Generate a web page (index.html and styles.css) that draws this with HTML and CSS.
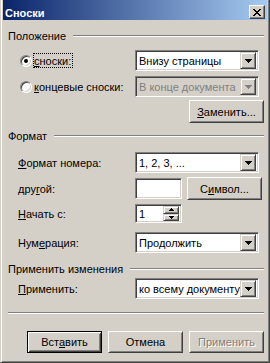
FILE: index.html
```html
<!DOCTYPE html>
<html lang="ru">
<head>
    <meta charset="UTF-8">
    <title>Сноски</title>
    <link rel="stylesheet" href="styles.css">
</head>
<body>
    <div class="window">
        <div class="titlebar">
            <span class="title">Сноски</span>
            <span class="close">
                <svg width="8" height="7" viewBox="0 0 8 7" shape-rendering="crispEdges"><path d="M0 0h2v1H0z M6 0h2v1H6z M1 1h2v1H1z M5 1h2v1H5z M2 2h4v1H2z M3 3h2v1H3z M2 4h4v1H2z M1 5h2v1H1z M5 5h2v1H5z M0 6h2v1H0z M6 6h2v1H6z" fill="#000"/></svg>
            </span>
        </div>

        <div class="content">
            <!-- Положение -->
            <div class="group-title g1"><span>Положение</span><i class="etch"></i></div>
            <div class="row radio-row r1">
                <span class="radio checked"></span>
                <span class="radio-label"><span class="focus"><u>с</u>носки:</span></span>
                <div class="combo"><span class="value">Внизу страницы</span><span class="arrow"><svg width="7" height="4" viewBox="0 0 7 4" shape-rendering="crispEdges"><path d="M0 0h7v1H0z M1 1h5v1H1z M2 2h3v1H2z M3 3h1v1H3z" fill="#000"/></svg></span></div>
            </div>
            <div class="row radio-row r2">
                <span class="radio"></span>
                <span class="radio-label"><u>к</u>онцевые сноски:</span>
                <div class="combo disabled"><span class="value">В конце документа</span><span class="arrow"><svg width="7" height="4" viewBox="0 0 7 4" shape-rendering="crispEdges"><path d="M0 0h7v1H0z M1 1h5v1H1z M2 2h3v1H2z M3 3h1v1H3z" fill="#808080"/></svg></span></div>
            </div>
            <div class="row right r3">
                <button class="btn"><u>З</u>аменить...</button>
            </div>

            <!-- Формат -->
            <div class="group-title g2"><span>Формат</span><i class="etch"></i></div>
            <div class="row r4">
                <span class="label"><u>Ф</u>ормат номера:</span>
                <div class="combo"><span class="value">1, 2, 3, ...</span><span class="arrow"><svg width="7" height="4" viewBox="0 0 7 4" shape-rendering="crispEdges"><path d="M0 0h7v1H0z M1 1h5v1H1z M2 2h3v1H2z M3 3h1v1H3z" fill="#000"/></svg></span></div>
            </div>
            <div class="row r5">
                <span class="label">дру<u>г</u>ой:</span>
                <div class="field small"></div>
                <button class="btn symbol">С<u>и</u>мвол...</button>
            </div>
            <div class="row r6">
                <span class="label"><u>Н</u>ачать с:</span>
                <div class="field small spin">
                    <span class="value">1</span>
                    <span class="spin-btns">
                        <span class="spin-btn"><svg width="5" height="3" viewBox="0 0 5 3" shape-rendering="crispEdges"><path d="M2 0h1v1H2z M1 1h3v1H1z M0 2h5v1H0z" fill="#000"/></svg></span>
                        <span class="spin-btn"><svg width="5" height="3" viewBox="0 0 5 3" shape-rendering="crispEdges"><path d="M0 0h5v1H0z M1 1h3v1H1z M2 2h1v1H2z" fill="#000"/></svg></span>
                    </span>
                </div>
            </div>
            <div class="row r7">
                <span class="label">Нум<u>е</u>рация:</span>
                <div class="combo"><span class="value">Продолжить</span><span class="arrow"><svg width="7" height="4" viewBox="0 0 7 4" shape-rendering="crispEdges"><path d="M0 0h7v1H0z M1 1h5v1H1z M2 2h3v1H2z M3 3h1v1H3z" fill="#000"/></svg></span></div>
            </div>

            <!-- Применить изменения -->
            <div class="group-title g3"><span>Применить изменения</span><i class="etch"></i></div>
            <div class="row r8">
                <span class="label"><u>П</u>рименить:</span>
                <div class="combo"><span class="value">ко всему документу</span><span class="arrow"><svg width="7" height="4" viewBox="0 0 7 4" shape-rendering="crispEdges"><path d="M0 0h7v1H0z M1 1h5v1H1z M2 2h3v1H2z M3 3h1v1H3z" fill="#000"/></svg></span></div>
            </div>

            <div class="separator"></div>

            <div class="buttons">
                <button class="btn default">Вст<u>а</u>вить</button>
                <button class="btn">Отмена</button>
                <button class="btn disabled">Применить</button>
            </div>
        </div>
    </div>
</body>
</html>
```

FILE: styles.css
```css
/* Диалог в классическом стиле Windows */
body {
    margin: 0;
    background-color: #d4d0c8;
    font-family: "Liberation Sans", Tahoma, Arial, sans-serif;
    font-size: 11px;
    color: #000;
}
.window {
    width: 270px;
    height: 363px;
    box-sizing: border-box;
    background-color: #d4d0c8;
    border: 1px solid;
    border-top: none;
    border-color: #d4d0c8 #404040 #404040 #d4d0c8;
    box-shadow: inset 1px 0 #fff, inset -1px -1px #808080;
    padding: 0 2px 2px 2px;
}
.titlebar {
    display: flex;
    justify-content: space-between;
    align-items: flex-start;
    height: 20px;
    background: linear-gradient(to right, #0a246a, #a6caf0);
    color: #fff;
}
.title {
    font-weight: bold;
    line-height: 14px;
    padding: 6px 0 0 2px;
}
.close {
    display: flex;
    justify-content: center;
    align-items: center;
    width: 16px;
    height: 14px;
    margin: 5px 2px 0 0;
    box-sizing: border-box;
    background-color: #d4d0c8;
    border: 1px solid;
    border-color: #fff #404040 #404040 #fff;
    box-shadow: inset -1px -1px #808080;
}
.content {
    padding: 0 3px 0 5px;
}
u {
    text-decoration: underline;
    text-underline-offset: 1px;
}

/* Заголовки групп */
.group-title {
    display: flex;
    align-items: flex-start;
    line-height: 13px;
    height: 13px;
}
.group-title .etch {
    flex: 1;
    height: 0;
    margin: 5px 0 0 7px;
    border-top: 1px solid #808080;
    border-bottom: 1px solid #fff;
}
.g1 { margin-top: 10px; }
.g2 { margin-top: 7px; }
.g3 { margin-top: 10px; }

/* Строки */
.row {
    display: flex;
    align-items: center;
    height: 21px;
    padding-left: 10px;
}
.row.right {
    justify-content: flex-end;
    height: 23px;
}
.radio-row {
    padding-left: 12px;
}
.r1 { margin-top: 7px; }
.r2 { margin-top: 5px; }
.r3 { margin-top: 3px; }
.r4 { margin-top: 9px; }
.r5 { margin-top: 4px; height: 23px; }
.r6 { margin-top: 4px; height: 19px; }
.r7 { margin-top: 9px; }
.r8 { margin-top: 2px; }

.label {
    width: 117px;
}
.radio-label {
    width: 101px;
    margin-left: 2px;
}
.focus {
    outline: 1px dotted #000;
    outline-offset: 0;
    padding: 1px 1px 0 0;
}

/* Радиокнопки */
.radio {
    position: relative;
    width: 12px;
    height: 12px;
    box-sizing: border-box;
    border-radius: 50%;
    background-color: #fff;
    border: 1px solid;
    border-color: #808080 #fff #fff #808080;
    box-shadow: inset 1px 1px #404040, inset -1px -1px #d4d0c8;
}
.radio.checked::after {
    content: "";
    position: absolute;
    left: 3px;
    top: 3px;
    width: 4px;
    height: 4px;
    border-radius: 50%;
    background-color: #000;
}

/* Поля и списки */
.combo, .field {
    display: flex;
    align-items: center;
    box-sizing: border-box;
    height: 21px;
    background-color: #fff;
    border: 1px solid;
    border-color: #808080 #fff #fff #808080;
    box-shadow: inset 1px 1px #404040, inset -1px -1px #d4d0c8;
    padding: 2px;
}
.combo {
    width: 124px;
    justify-content: space-between;
}
.combo .value, .field .value {
    padding-left: 1px;
    white-space: nowrap;
    overflow: hidden;
}
.combo.disabled {
    background-color: #d4d0c8;
    color: #808080;
}
.arrow, .spin-btn {
    display: flex;
    justify-content: center;
    align-items: center;
    box-sizing: border-box;
    background-color: #d4d0c8;
    border: 1px solid;
    border-color: #d4d0c8 #404040 #404040 #d4d0c8;
    box-shadow: inset 1px 1px #fff, inset -1px -1px #808080;
}
.arrow {
    width: 16px;
    height: 17px;
    flex-shrink: 0;
}
.field.small {
    width: 47px;
}
.field.spin {
    height: 19px;
    justify-content: space-between;
}
.spin-btns {
    display: flex;
    flex-direction: column;
    width: 16px;
    height: 15px;
}
.spin-btn {
    height: 7px;
    flex: 1;
}
.spin-btn + .spin-btn {
    height: 8px;
}

/* Кнопки */
.btn {
    box-sizing: border-box;
    width: 75px;
    height: 23px;
    padding: 0;
    font-family: inherit;
    font-size: 11px;
    color: #000;
    background-color: #d4d0c8;
    border: 1px solid;
    border-color: #fff #404040 #404040 #fff;
    box-shadow: inset 1px 1px #d4d0c8, inset -1px -1px #808080;
}
.btn.symbol {
    margin-left: 5px;
}
.btn.default {
    border-color: #000;
    box-shadow: inset 1px 1px #fff, inset -1px -1px #404040, inset 2px 2px #d4d0c8, inset -2px -2px #808080;
}
.btn.disabled {
    color: #808080;
    text-shadow: 1px 1px #fff;
}
.separator {
    margin-top: 13px;
    border-top: 1px solid #808080;
    border-bottom: 1px solid #fff;
}
.buttons {
    display: flex;
    justify-content: flex-end;
    gap: 6px;
    margin-top: 17px;
}
.buttons .btn {
    height: 22px;
}
```
